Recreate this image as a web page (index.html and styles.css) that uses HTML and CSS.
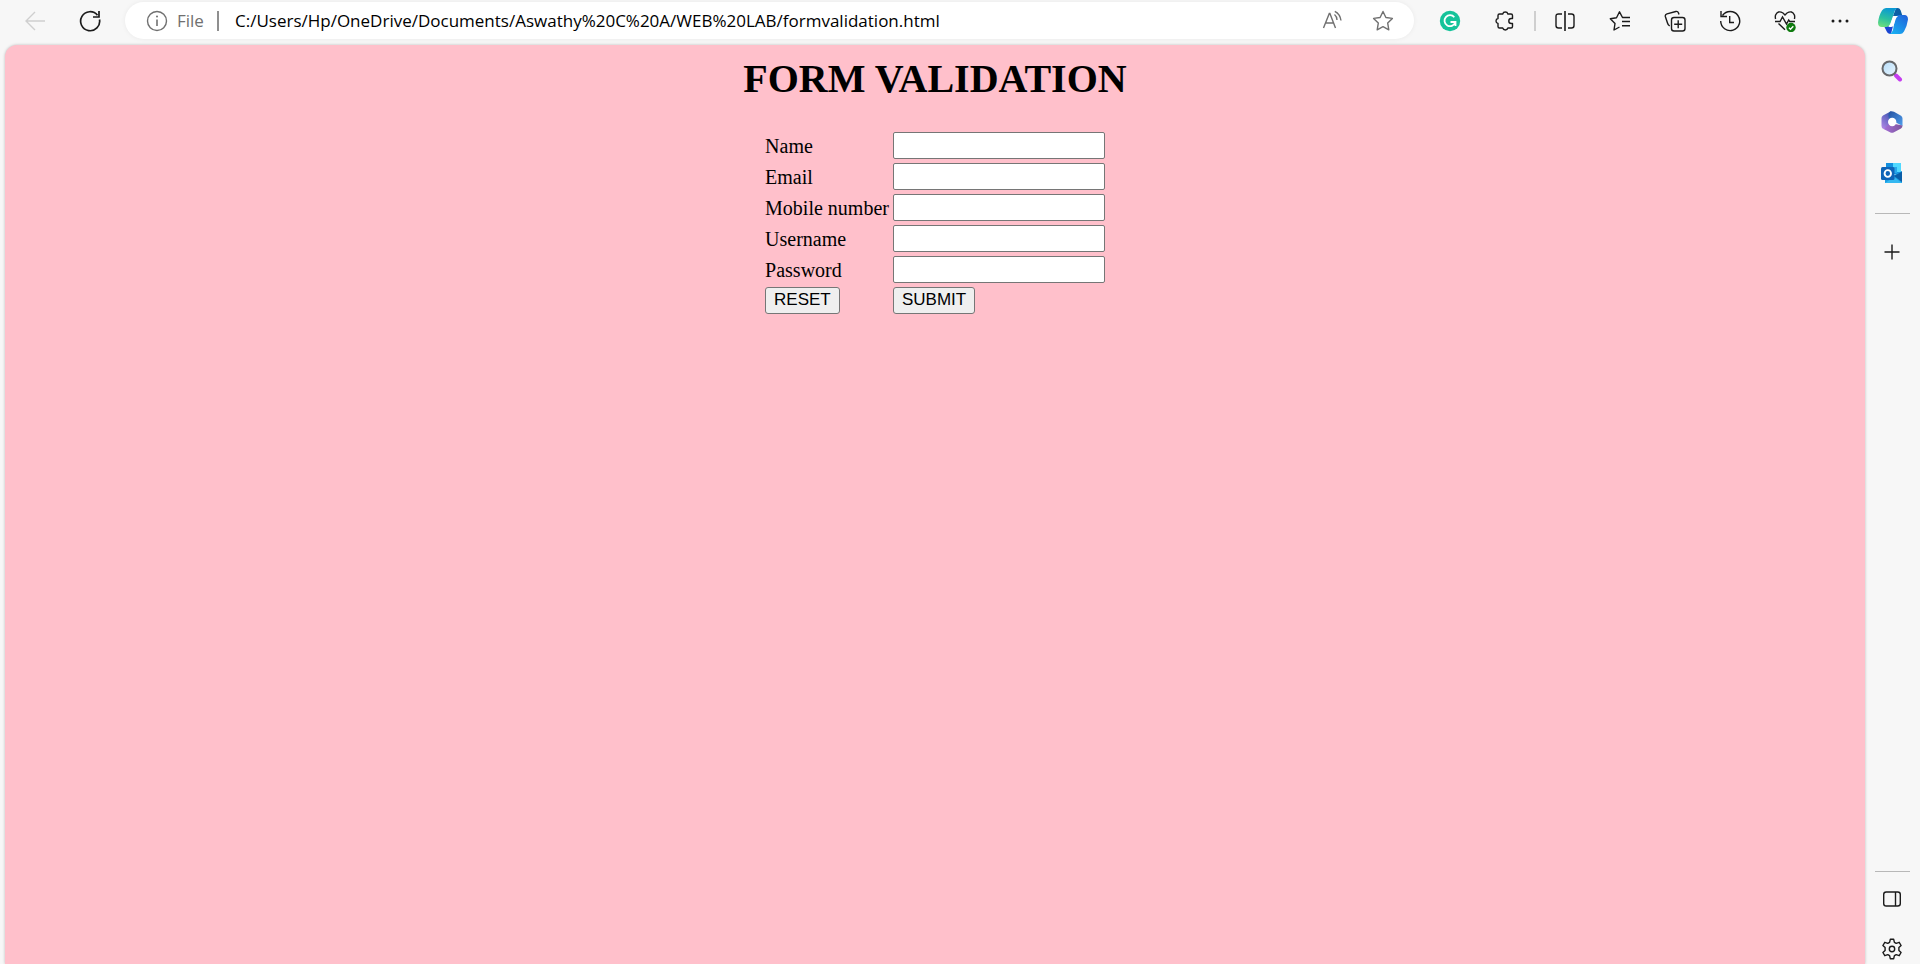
FILE: index.html
```html
<!DOCTYPE html>
<html lang="en">
<head>
<meta charset="utf-8">
<meta name="viewport" content="width=device-width, initial-scale=1">
<title>Form validation</title>
<link rel="stylesheet" href="styles.css">
</head>
<body>
<div class="browser">
  <header class="toolbar">
    <button class="icon-btn back" aria-label="Back" disabled><svg width="22" height="22" viewBox="0 0 22 22"><path d="M21 11H2M11 2L2 11l9 9"/></svg></button>
    <button class="icon-btn reload" aria-label="Reload"><svg width="22" height="22" viewBox="0 0 22 22"><path d="M20.500 9.500A9.500 9.500 0 1 1 18.500 5.200M20 1v6h-6" stroke-width="1.700"/></svg></button>
    <div class="address">
      <button class="icon-btn muted" aria-label="Site information"><svg width="22" height="22" viewBox="0 0 22 22"><circle cx="11" cy="11" r="9.500"/><path d="M11 9.500V16" stroke-width="1.600"/><circle cx="11" cy="6.500" r="1" fill="currentColor" stroke="none"/></svg></button>
      <label class="scheme" for="url">File</label>
      <span class="address-rule"></span>
      <input class="url" id="url" type="text" spellcheck="false" value="C:/Users/Hp/OneDrive/Documents/Aswathy%20C%20A/WEB%20LAB/formvalidation.html">
      <button class="icon-btn muted" aria-label="Read aloud"><svg width="22" height="22" viewBox="0 0 22 22"><path d="M1.500 18L7.300 3.500h.6L13.500 18M3.500 13h8.300M12.500 4.500q2.300 1.800 2.500 5.500M12.800 1.300q5.200 2.500 6.200 9.200"/></svg></button>
      <button class="icon-btn muted" aria-label="Add to favorites"><svg width="22" height="22" viewBox="0 0 22 22"><path d="M11 1.500l2.900 6 6.500.9-4.700 4.700 1.100 6.700L11 16.700l-5.800 3.100 1.100-6.700L1.600 8.400l6.500-.9z" stroke-linejoin="round"/></svg></button>
    </div>
    <div class="tools">
      <button class="icon-btn" aria-label="Grammarly"><svg width="22" height="22" viewBox="0 0 22 22"><circle cx="11" cy="11" r="10.200" fill="#15c39a" stroke="none"/><path d="M15.300 7.200A5.500 5.500 0 1 0 16.200 12.500M11.500 12h5v4" stroke="#fff" stroke-width="1.800"/></svg></button>
      <button class="icon-btn" aria-label="Extensions"><svg width="22" height="22" viewBox="0 0 22 22"><path d="M5.500 4h3.200a2.700 2.700 0 0 1 5.200 0H17q1.500 0 1.500 1.500v3h-1.200a2.500 2.500 0 0 0 0 5h1.200v3Q18.500 18 17 18h-3.100a2.700 2.700 0 0 1-5.200 0H5.500Q4 18 4 16.500v-3.100a2.500 2.500 0 0 1 0-4.900v-3Q4 4 5.500 4z" stroke-linejoin="round"/></svg></button>
      <span class="tool-rule"></span>
      <button class="icon-btn" aria-label="Split screen"><svg width="22" height="22" viewBox="0 0 22 22"><path d="M11 1v20" stroke-width="1.600"/><path d="M8 4H4.500Q2 4 2 6.500v9Q2 18 4.500 18H8M14 4h3.500Q20 4 20 6.500v9q0 2.500-2.500 2.500H14"/></svg></button>
      <button class="icon-btn" aria-label="Favorites"><svg width="22" height="22" viewBox="0 0 22 22"><path d="M10.500 17L5 20l1-6.500L1.300 8.700l6.200-1L10.500 1.800l3 5.700H21M13 11.500h8M13 15.800h8" stroke-linejoin="round"/></svg></button>
      <button class="icon-btn" aria-label="Collections"><svg width="22" height="22" viewBox="0 0 22 22"><path d="M15 4.500l-.5-1.500Q13.800 1 11.800 1.500L3 3.800Q.8 4.500 1.400 6.700L3.500 13q.5 2 2.200 3"/><rect x="7.500" y="7.500" width="13.500" height="13.500" rx="2.500"/><path d="M14.200 10.300v8M10.200 14.300h8"/></svg></button>
      <button class="icon-btn" aria-label="History"><svg width="22" height="22" viewBox="0 0 22 22"><path d="M3.500 5.500A9.500 9.500 0 1 1 1.700 11M2 1v5.500h6M10.700 6v6.500H15"/></svg></button>
      <button class="icon-btn" aria-label="Browser essentials"><svg width="22" height="22" viewBox="0 0 22 22"><path d="M1.600 9Q1 6.800 1.600 5q2.200-5 7.400-2L11 5l2-2q5.200-3 7.400 2 .6 1.800 0 4M1 11.500h5L8.500 7l4 7 2.200-4 1 1.500H21M4.500 13.500l6.500 6.300"/><circle cx="17" cy="17.500" r="4.700" fill="#0f7b0f" stroke="none"/><path d="M15 17.700l1.500 1.500 2.800-3" stroke="#fff"/></svg></button>
      <button class="icon-btn" aria-label="Settings and more"><svg width="22" height="22" viewBox="0 0 22 22"><g fill="currentColor" stroke="none"><circle cx="4" cy="11" r="1.500"/><circle cx="11" cy="11" r="1.500"/><circle cx="18" cy="11" r="1.500"/></g></svg></button>
    </div>
    <button class="icon-btn copilot" aria-label="Copilot"><svg width="30" height="28" viewBox="0 0 30 28">
      <defs>
        <linearGradient id="cpA" x1=".2" y1="1" x2=".5" y2="0"><stop offset="0" stop-color="#6fe07c"/><stop offset=".45" stop-color="#2cc0a0"/><stop offset="1" stop-color="#0a98d4"/></linearGradient>
        <linearGradient id="cpB" x1="0" y1="1" x2=".8" y2="0"><stop offset="0" stop-color="#17b8f4"/><stop offset="1" stop-color="#1f66dc"/></linearGradient>
      </defs>
      <g stroke="none"><path d="M15 9L18 1h2q2 0 2.700 2.500L24.500 9z" fill="#0b5fa5"/><path d="M6 19h9l-2 8Q9.500 27 8.500 24z" fill="#1a45d2"/><path d="M8 1h12q-3 .5-4 5l-3 9q-1.500 5-5 5H4q-4 0-4-4.500Q1 8 4 3.500 5.500 1 8 1z" fill="url(#cpA)"/><path d="M21 8h5.500Q30 8 30 12.500q-1 7-4 12-1.500 2.500-4 2.500H11.500q2.500-1 3.500-4l2-11q1-4 4-4z" fill="url(#cpB)"/><path d="M16.500 9H20q-1.700 1-2.400 3.500L16 17.500q-.8 2.500-2.800 2.500H10q1.700-.5 2.400-3l1.600-4.500Q14.800 9.500 16.500 9z" fill="#fff"/></g></svg></button>
  </header>

  <main class="page">
    <h1 class="title">FORM VALIDATION</h1>
    <form class="form">
      <label for="name">Name</label><input class="field" id="name" type="text">
      <label for="email">Email</label><input class="field" id="email" type="text">
      <label for="mobile">Mobile number</label><input class="field" id="mobile" type="text">
      <label for="username">Username</label><input class="field" id="username" type="text">
      <label for="password">Password</label><input class="field" id="password" type="password">
      <button class="action" type="reset">RESET</button><button class="action" type="button">SUBMIT</button>
    </form>
  </main>

  <aside class="sidebar">
    <div class="group">
      <button class="icon-btn" aria-label="Search"><svg width="22" height="22" viewBox="0 0 22 22"><defs><linearGradient id="lens" x1="0" y1="0" x2="1" y2="1"><stop offset="0" stop-color="#b5dcf8"/><stop offset="1" stop-color="#e9f6ff"/></linearGradient></defs><path d="M12 12l3 3" stroke="#999" stroke-width="2"/><path d="M15 15.500l4 4" stroke="#c53df0" stroke-width="4" stroke-linecap="round"/><circle cx="8.500" cy="8.500" r="7" fill="url(#lens)" stroke="#66686b" stroke-width="2"/></svg></button>
      <button class="icon-btn" aria-label="Microsoft 365"><svg width="22" height="22" viewBox="0 0 22 22"><defs><linearGradient id="mA" x1="0" y1="1" x2=".6" y2="0"><stop offset="0" stop-color="#b78ae8"/><stop offset="1" stop-color="#4458b4"/></linearGradient><linearGradient id="mB" x1="0" y1="0" x2="1" y2="1"><stop offset="0" stop-color="#23509f"/><stop offset="1" stop-color="#4f9fee"/></linearGradient><linearGradient id="mC"><stop offset="0" stop-color="#a570d8"/><stop offset="1" stop-color="#7d559c"/></linearGradient></defs><g stroke="none"><path d="M10 .3L2 4.500Q.5 5.500.5 7v8q0 2.500 2 3L8 15V8l3-3z" fill="url(#mA)"/><path d="M9 .5q2-.8 4 .3l7 4q1.500 1 1.500 2.700V15L14 11 8 7.500Q6.500 3 9 .5z" fill="url(#mB)"/><path d="M2.500 18L8 13l6 0 7.500 1.500q0 2-1.500 3l-7 3.700q-2 1-4 0z" fill="url(#mC)"/><circle cx="11.200" cy="11" r="4.200" fill="#fff"/></g></svg></button>
      <button class="icon-btn" aria-label="Outlook"><svg width="22" height="22" viewBox="0 0 22 22"><g stroke="none"><path d="M5 1h15v11H5z" fill="#1490df"/><path d="M12 1h8v9h-8z" fill="#50d9ff"/><path d="M12 5h4v6h-4z" fill="#28a8ea"/><path d="M4 9l9 4 8-4v12H4z" fill="#1b9de2"/><path d="M21 9.500V20l-8-6z" fill="#0a5ea8"/><path d="M4 21l9-6 8 6z" fill="#35b8f1"/><rect x="0" y="5" width="13.500" height="13" rx="1.500" fill="#0f64b8"/></g><ellipse cx="6.800" cy="11.500" rx="3.200" ry="3.400" stroke="#fff" stroke-width="1.900"/></svg></button>
      <hr class="rule">
      <button class="icon-btn plus" aria-label="Customize"><svg width="22" height="22" viewBox="0 0 22 22"><path d="M11 3.500v15M3.500 11h15"/></svg></button>
    </div>
    <div class="group group-end">
      <hr class="rule">
      <button class="icon-btn" aria-label="Toggle sidebar"><svg width="22" height="22" viewBox="0 0 22 22"><rect x="2.700" y="4" width="16.600" height="14" rx="2.500"/><path d="M14.500 4v14"/></svg></button>
      <button class="icon-btn" aria-label="Settings"><svg width="22" height="22" viewBox="0 0 22 22"><path d="M9.300 1.300h3.400l.7 3 1.800 1 3-1 1.900 3.200-2.200 2.100v2.800l2.200 2.100-1.900 3.200-3-1-1.800 1-.7 3H9.300l-.7-3-1.800-1-3 1-1.900-3.200 2.200-2.100V9.600L1.900 7.500l1.900-3.200 3 1 1.800-1z" stroke-linejoin="round"/><circle cx="11" cy="11" r="2.700"/></svg></button>
    </div>
  </aside>
</div>
</body>
</html>
```
FILE: styles.css
```css
* { box-sizing: border-box; }

body {
  margin: 0;
  background: #f7f7f7;
  font-family: "Liberation Serif", "Times New Roman", serif;
  color: #000;
}

.browser {
  display: grid;
  grid-template-columns: 1fr 55px;
  grid-template-rows: auto 1fr;
  min-height: 100vh;
}

.toolbar {
  grid-column: 1 / -1;
  display: flex;
  align-items: center;
  height: 45px;
  padding: 0 12px 4px 20px;
}

.icon-btn {
  display: flex;
  align-items: center;
  justify-content: center;
  flex: none;
  width: 30px;
  height: 30px;
  padding: 0;
  border: 0;
  background: none;
  color: #1b1b1b;
}

.icon-btn svg {
  display: block;
  flex: none;
  fill: none;
  stroke: currentColor;
  stroke-width: 1.4;
}

.back { color: #cfcfcf; }
.reload { margin: 0 20px 0 25px; }
.muted { color: #707070; }

.address {
  display: flex;
  align-items: center;
  flex: 1;
  height: 37px;
  padding: 0 16px 0 17px;
  border-radius: 19px;
  background: #fff;
  box-shadow: 0 0 5px rgba(0, 0, 0, 0.06);
}

.scheme,
.url {
  font: 17px/24px "Open Sans", "Noto Sans", sans-serif;
}

.scheme {
  width: 39px;
  padding-left: 5px;
  margin-right: 6px;
  color: #707070;
}

.address-rule {
  width: 2px;
  height: 20px;
  background: #8f8f8f;
}

.url {
  flex: 1;
  min-width: 0;
  padding: 0;
  margin-left: 16px;
  border: 0;
  background: none;
  color: #000;
  outline: none;
}

.address .muted + .muted { margin-left: 20px; }

.tools {
  display: flex;
  align-items: center;
  gap: 25px;
  margin-left: 21px;
}

.tool-rule {
  width: 2px;
  height: 20px;
  margin: 0 -11px;
  background: #cfcfcf;
}

.copilot { margin-left: 23px; }

.page {
  margin-left: 5px;
  padding: 11px 10px;
  border-radius: 12px 12px 0 0;
  background: #ffc0cb;
  box-shadow: 0 0 3px rgba(0, 0, 0, 0.25);
}

.title {
  margin: 0 0 30px;
  font-size: 40px;
  line-height: 46px;
  text-align: center;
}

.form {
  display: grid;
  grid-template-columns: auto 212px;
  justify-content: center;
  justify-items: start;
  align-items: center;
  gap: 4px;
  font-size: 20px;
  line-height: 24px;
}

.field {
  width: 100%;
  height: 27px;
  border: 1px solid #767676;
  border-radius: 2px;
  background: #fff;
  font-size: 17px;
}

.action {
  height: 27px;
  padding: 0 8px 2px;
  border: 1px solid #767676;
  border-radius: 3px;
  background: #efefef;
  color: #000;
  font: 17px/22px "Liberation Sans", Arial, sans-serif;
}

.sidebar {
  display: flex;
  flex-direction: column;
  justify-content: space-between;
  padding: 11px 1px 0 0;
}

.group {
  display: flex;
  flex-direction: column;
  align-items: center;
  gap: 21px;
}

.rule {
  width: 35px;
  height: 1px;
  margin: 4px 0 2px;
  border: 0;
  background: #b8b8b8;
}

.group-end { gap: 20px; }
.group-end .rule { margin: 0 0 -8px; }
```
